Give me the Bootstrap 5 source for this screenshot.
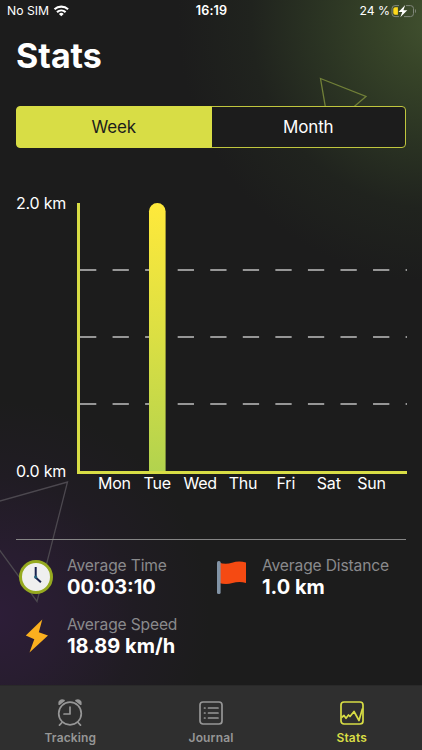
<!DOCTYPE html>
<html lang="en" data-bs-theme="dark">
<head>
<meta charset="utf-8">
<meta name="viewport" content="width=device-width, initial-scale=1">
<title>Stats</title>
<link rel="stylesheet" href="https://cdn.jsdelivr.net/npm/bootstrap@5.3.0/dist/css/bootstrap.min.css">
<style>
:root { --lime: #d8dd45; --ink: #1c1c1c; }
body { font-family: Inter, "Liberation Sans", sans-serif; background: var(--ink); color: #fff; }
.screen {
  width: 422px; height: 750px; isolation: isolate;
  background:
    radial-gradient(circle 260px at 438px 22px, #425230 0%, #374428 20%, #2b3423 45%, #20231e 72%, #1c1c1c00 100%),
    radial-gradient(circle 215px at -5px 616px, #2d1d38 0%, #281d30 30%, #201c23 65%, #1c1c1c00 100%),
    var(--ink);
}
.backdrop { z-index: -1; }
.status-bar { height: 22px; font-size: 12.2px; line-height: 22px; padding: 0 6px 0 7px; }
.status-bar > * { flex: 1 1 0; }
.clock-now { font-size: 12.6px; letter-spacing: .15px; }
.page-title { font-size: 34px; line-height: 40px; margin: 14px 0 30px; }
.segments { height: 42px; }
.segments .btn {
  --bs-btn-color: #fff; --bs-btn-bg: var(--ink); --bs-btn-border-color: #c0c63e;
  --bs-btn-active-color: #1c1c1c; --bs-btn-active-bg: var(--lime); --bs-btn-active-border-color: var(--lime);
  --bs-btn-border-radius: 4px; --bs-btn-padding-y: 0;
  font-size: 17px; line-height: 40px; letter-spacing: -.15px;
}
.chart { margin-top: 55px; }
.scale { width: 61px; height: 270px; font-size: 16px; line-height: 20px; letter-spacing: -.2px; }
.scale span:first-child { margin-top: -10px; }
.scale span:last-child { margin-bottom: -8px; }
.plot { height: 271px; border-left: 3px solid var(--lime); border-bottom: 3px solid var(--lime); }
.plot svg { width: 327px; height: 268px; }
.days { margin-top: -1px; padding: 0 14px 0 16px; font-size: 16px; line-height: 20px; letter-spacing: -.2px; }
.days span { flex: 1 1 0; text-align: center; }
.rule { border-top: 1px solid #858585; opacity: 1; margin: 46px 0 0; }
.summary { padding-top: 14px; row-gap: 15px; }
.summary .glyph { width: 51px; height: 44px; margin-top: 1px; margin-bottom: -1px; }
.summary .cell { width: 195px; }
.caption { font-size: 15.6px; line-height: 22px; padding-top: 1px; margin-bottom: -1px; letter-spacing: -.15px; color: #8a8a8c; white-space: nowrap; }
.value { font-size: 20px; line-height: 22px; font-weight: 700; white-space: nowrap; }
.tab-strip { height: 65px; background: #2f2f2f; border-top: 1px solid #292929; }
.tab-strip .nav-link { --bs-nav-link-color: #969696; color: #969696; padding: 12px 0 0; font-size: 12px; line-height: 15px; font-weight: 600; letter-spacing: .15px; }
.tab-strip .nav-link.active { color: var(--lime); }
.tab-strip svg { margin-bottom: 4px; }
</style>
<script src="https://cdn.jsdelivr.net/npm/bootstrap@5.3.0/dist/js/bootstrap.bundle.min.js"></script>
</head>
<body>
<div class="screen position-relative overflow-hidden d-flex flex-column">
  <svg class="backdrop position-absolute top-0 start-0" width="422" height="750" fill="none">
    <path d="M320.5 78.5 366 96.500 329 128Z" stroke="#718038" stroke-width="1.3"/>
    <path d="M-30 509.500 67.500 482 37 601.500Z" stroke="#4c484f" stroke-width="1.3"/>
  </svg>

  <header class="status-bar d-flex align-items-center">
    <div class="d-flex align-items-center"><span>No SIM</span>
      <svg class="ms-1" width="17" height="12" viewBox="0 0 17 12" fill="none" stroke="#fff" stroke-width="2.100"><path d="M1.500 4.300a10 10 0 0 1 13.600 0M4 7.100a6.400 6.400 0 0 1 8.600 0"/><path d="M8.300 11.300 5.900 8.900a3.600 3.600 0 0 1 4.800 0Z" fill="#fff" stroke="none"/></svg>
    </div>
    <div class="clock-now text-center fw-semibold">16:19</div>
    <div class="d-flex align-items-center justify-content-end"><span>24 %</span>
      <svg width="26" height="14" viewBox="-1 0 26 14"><path d="M8 1.600H4a3 3 0 0 0-3 3v5a3 3 0 0 0 3 3h4M15 1.600h4.500a3 3 0 0 1 3 3v5a3 3 0 0 1-3 3H13" fill="none" stroke="#81877b"/><path d="M24 5v4.200q1-.6 1-2.100T24 5Z" fill="#81877b"/><path d="M2.300 5a1.800 1.800 0 0 1 1.800-1.800h2.800v7.600H4.100A1.800 1.800 0 0 1 2.300 9Z" fill="#ffd91c"/><path d="M14.200 1 7.500 8h3.800L9.300 13.300 16.300 6.200h-3.900Z" fill="#fff"/></svg>
    </div>
  </header>

  <main class="px-3 flex-grow-1">
    <h1 class="page-title fw-bold">Stats</h1>
    <div class="segments btn-group w-100" role="group" aria-label="Period">
      <button type="button" class="btn active w-50">Week</button>
      <button type="button" class="btn w-50">Month</button>
    </div>

    <section class="chart d-flex">
      <div class="scale d-flex flex-column justify-content-between flex-shrink-0"><span>2.0 km</span><span>0.0 km</span></div>
      <div class="flex-grow-1">
        <div class="plot">
          <svg class="d-block" viewBox="0 0 327 268">
            <defs><linearGradient id="barFill" x1="0" y1="0" x2="0" y2="1"><stop offset="0" stop-color="#ffe93b"/><stop offset=".5" stop-color="#dbdf43"/><stop offset="1" stop-color="#b2d34e"/></linearGradient></defs>
            <path d="M0 67H327M0 134H327M0 201H327" stroke="#969696" stroke-width="2" stroke-dasharray="16.300 16.260"/>
            <path d="M69 268V8.300a8.300 8.300 0 0 1 16.600 0V268Z" fill="url(#barFill)"/>
          </svg>
        </div>
        <div class="days d-flex"><span>Mon</span><span>Tue</span><span>Wed</span><span>Thu</span><span>Fri</span><span>Sat</span><span>Sun</span></div>
      </div>
    </section>

    <hr class="rule">

    <section class="summary d-flex flex-wrap">
      <div class="cell d-flex">
        <svg class="glyph flex-shrink-0" viewBox="0 0 51 44"><circle cx="20" cy="22" r="15.500" fill="#efefef" stroke="#96aa20" stroke-width="3"/><path d="M19.700 12v10.500l5.200 4.800" fill="none" stroke="#19224f" stroke-width="2"/><circle cx="19.700" cy="22" r="1.600" fill="#20607d"/></svg>
        <div><div class="caption">Average Time</div><div class="value">00:03:10</div></div>
      </div>
      <div class="cell d-flex">
        <svg class="glyph flex-shrink-0" viewBox="0 0 51 44"><path d="M8 7.500q6.500 2.500 13 .2t14-.3v20.500q-7-1.800-13.500.2T8 28Z" fill="#f54a12"/><rect x="6" y="6" width="3.600" height="33" rx="1.500" fill="#8294a6"/></svg>
        <div><div class="caption">Average Distance</div><div class="value">1.0 km</div></div>
      </div>
      <div class="cell d-flex">
        <svg class="glyph flex-shrink-0" viewBox="0 0 51 44"><path d="M26.300 5.500 9.800 21.500 18.300 25.300 13.500 38.500 32 21.500 22.800 18.200Z" fill="#fbb01f"/></svg>
        <div><div class="caption">Average Speed</div><div class="value">18.89 km/h</div></div>
      </div>
    </section>
  </main>

  <nav class="tab-strip nav nav-justified flex-nowrap">
    <a class="nav-link d-flex flex-column align-items-center" href="#">
      <svg width="28" height="28" viewBox="0 0 28 28" fill="none" stroke="currentColor" stroke-width="1.700" stroke-linecap="round" stroke-linejoin="round"><circle cx="14" cy="15.500" r="11.300"/><path d="M14 9v7H8M6 24.500l-2.500 2.700M22 24.500l2.500 2.700"/><path d="M3.200 6.200C2.500 2.800 5.500 1.300 8 2.600ZM24.800 6.200C25.500 2.800 22.500 1.300 20 2.600Z" fill="currentColor"/></svg>
      Tracking
    </a>
    <a class="nav-link d-flex flex-column align-items-center" href="#">
      <svg width="28" height="28" viewBox="0 0 28 28" fill="none" stroke="currentColor" stroke-width="1.700" stroke-linecap="round"><rect x="3" y="4" width="22" height="22" rx="3"/><path d="M11.500 10h9.500M11.500 15h9.500M11.500 20h9.500M7.500 10h.5M7.500 15h.5M7.500 20h.5"/></svg>
      Journal
    </a>
    <a class="nav-link active d-flex flex-column align-items-center" href="#" aria-current="page">
      <svg width="28" height="28" viewBox="0 0 28 28" fill="none" stroke="currentColor" stroke-width="1.700" stroke-linejoin="round"><rect x="3" y="4" width="22" height="22" rx="3"/><path d="M3.500 19.500 6 17.500 8 20.300 10.500 17 12 18.500 16 13.500 21 22.500 24.500 10.500"/></svg>
      Stats
    </a>
  </nav>
</div>
</body>
</html>
